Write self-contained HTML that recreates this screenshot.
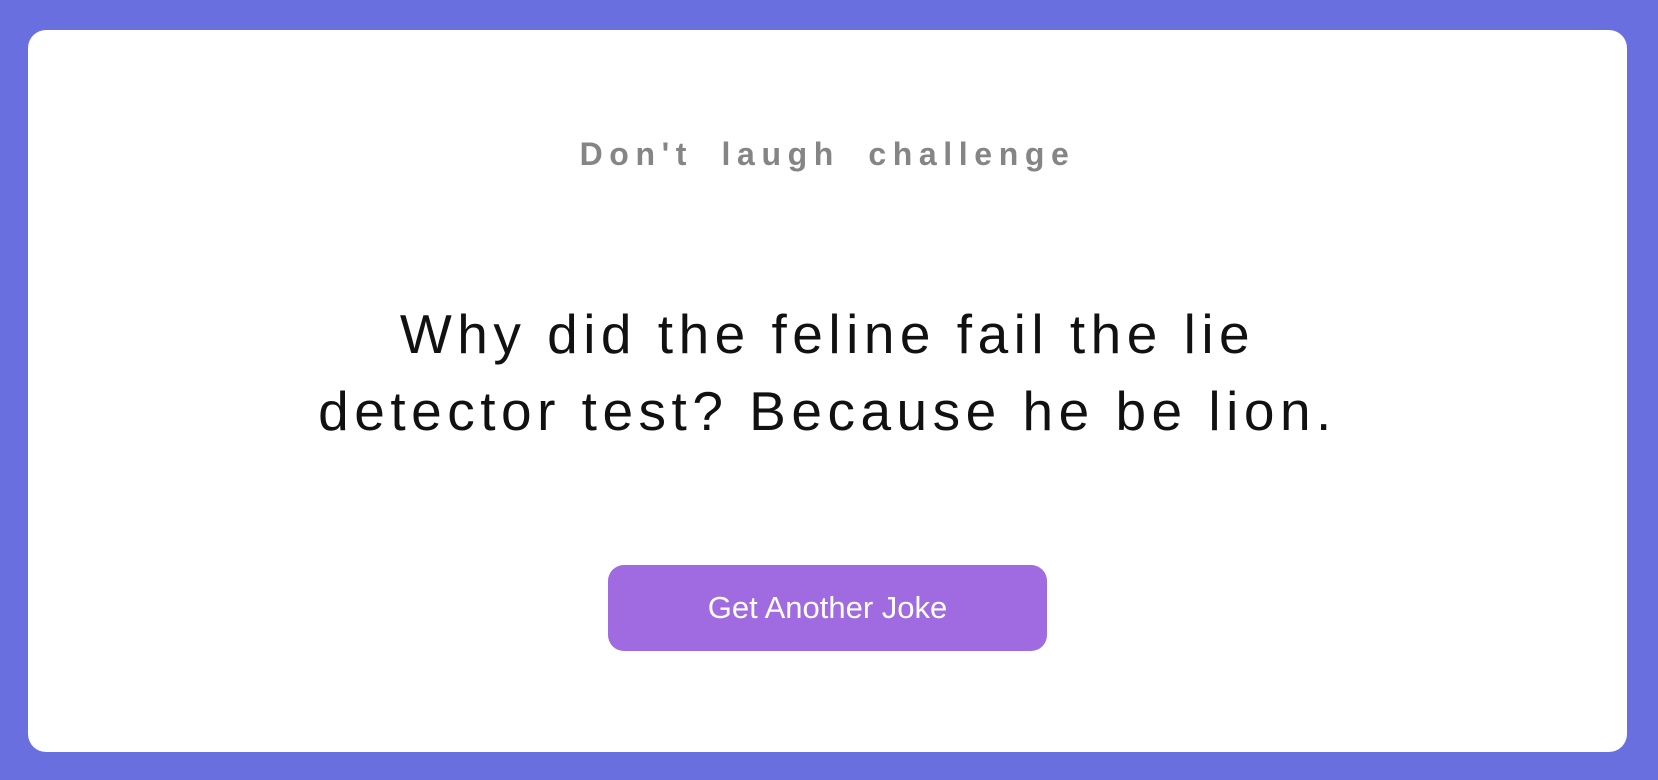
<!DOCTYPE html>
<html><head><meta charset="utf-8"><style>
html,body{margin:0;padding:0;}
body{width:1658px;height:780px;background:#6a6fe0;position:relative;overflow:hidden;font-family:"Liberation Sans",sans-serif;}
.card{position:absolute;left:28px;top:30px;width:1599px;height:722px;background:#fff;border-radius:18px;}
.title{position:absolute;left:0;right:0;top:106px;text-align:center;font-size:32px;font-weight:bold;color:#858585;letter-spacing:6.6px;word-spacing:13px;}
.joke{position:absolute;left:0;right:0;top:266px;text-align:center;font-size:55px;line-height:77px;color:#111;letter-spacing:5.5px;}
.btn{position:absolute;left:580px;top:535px;width:439px;height:86px;background:#a06ae0;border-radius:16px;color:#fff;font-size:31px;text-align:center;line-height:86px;}
</style></head><body>
<div class="card">
<div class="title">Don't laugh challenge</div>
<div class="joke">Why did the feline fail the lie<br>detector test? Because he be lion.</div>
<div class="btn">Get Another Joke</div>
</div>
</body></html>
